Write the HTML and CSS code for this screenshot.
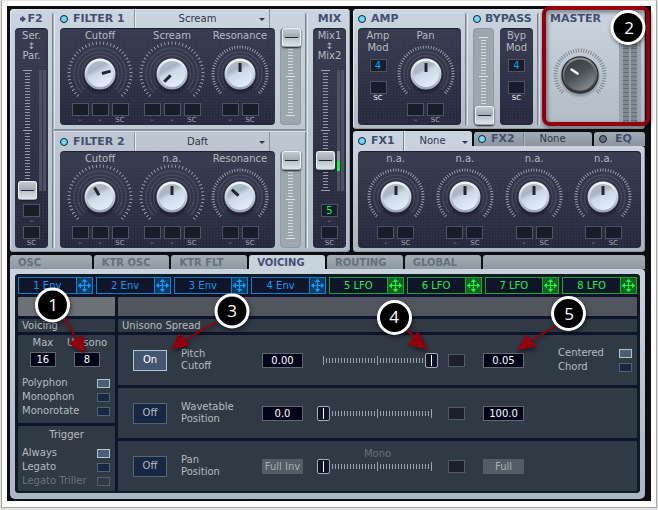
FILE: index.html
```html
<!DOCTYPE html>
<html lang="en">
<head>
<meta charset="utf-8">
<title>Synth</title>
<link rel="stylesheet" href="styles.css">
</head>
<body>
<svg class="defs" aria-hidden="true">
  <defs>
    <linearGradient id="cap-face" x1="0.1" y1="0" x2="0.6" y2="1">
      <stop offset="0" stop-color="#b4bfcb"/>
      <stop offset="0.35" stop-color="#a9b5c1"/>
      <stop offset="0.5" stop-color="#ccd8e5"/>
      <stop offset="1" stop-color="#e4eefa"/>
    </linearGradient>
    <linearGradient id="cap-rim" x1="0" y1="0" x2="0" y2="1">
      <stop offset="0" stop-color="#f4f9ff"/>
      <stop offset="1" stop-color="#98a4b4"/>
    </linearGradient>
    <linearGradient id="master-face" x1="0.1" y1="0" x2="0.7" y2="1">
      <stop offset="0" stop-color="#393d41"/>
      <stop offset="0.5" stop-color="#4a4f54"/>
      <stop offset="1" stop-color="#858c93"/>
    </linearGradient>
    <linearGradient id="master-rim" x1="0" y1="0" x2="0" y2="1">
      <stop offset="0" stop-color="#8d949b"/>
      <stop offset="1" stop-color="#34383c"/>
    </linearGradient>
    <filter id="soft" x="-30%" y="-30%" width="160%" height="160%"><feGaussianBlur stdDeviation="1.5"/></filter>
  </defs>
  <symbol id="rings" viewBox="-34 -34 68 68" overflow="visible">
    <g fill="none" stroke="#555a6c" stroke-opacity=".55" stroke-width="1.5">
      <path d="M-13 13A18.4 18.4 0 1 1 13 13"/>
      <path d="M-15.5 15.5A22 22 0 1 1 15.5 15.5"/>
    </g>
  </symbol>
  <symbol id="wide" viewBox="-34 -34 68 68" overflow="visible">
    <path d="M-18.4 18.4A26 26 0 1 1 18.4 18.4" fill="none" stroke="#555a6c" stroke-opacity=".55" stroke-width="1.5"/>
    <path pathLength="161" d="M-21.9 21.9A31 31 0 1 1 21.9 21.9" fill="none" stroke="#a3a8b2" stroke-width="3" stroke-dasharray="1 3"/>
  </symbol>
  <symbol id="narrow" viewBox="-34 -34 68 68" overflow="visible">
    <path pathLength="145" d="M-19.1 19.1A27 27 0 1 1 19.1 19.1" fill="none" stroke="#a3a8b2" stroke-width="3" stroke-dasharray="1 2"/>
  </symbol>
  <symbol id="cap" viewBox="-34 -34 68 68" overflow="visible">
    <circle cy="2" r="16" fill="#10121c" fill-opacity=".7" filter="url(#soft)"/>
    <circle r="15.5" fill="url(#cap-rim)"/>
    <circle r="13" fill="url(#cap-face)"/>
  </symbol>
  <symbol id="move" viewBox="0 0 15 15">
    <path d="M7.5 2v11M2 7.5h11" stroke="currentColor" stroke-width="1.2"/>
    <path d="M7.5 .8 10.3 4H4.7zM7.5 14.2 10.3 11H4.7zM.8 7.5 4 4.7v5.6zM14.2 7.5 11 4.7v5.6z" fill="currentColor"/>
  </symbol>
</svg>

<main class="sheet">
<div class="synth">
  <div class="upper">
    <section class="module filters">
      <div class="strip">
        <h2 class="center"><svg class="arrow" viewBox="0 0 6 8"><path d="M0 2.5h2V.5L6 4 2 7.5v-2H0z" fill="currentColor"/></svg>F2</h2>
        <div class="dark column">
          <label class="route" for="f2">Ser.<span>↕</span>Par.</label>
          <div class="lane">
            <input id="f2" class="fader long" type="range" min="0" max="100" value="0">
            <div class="meter"><i></i><i></i></div>
          </div>
          <label class="mod"><button></button>–</label>
          <label class="mod"><button></button>SC</label>
        </div>
      </div>
      <div class="groove"></div>
      <div class="pair">
        <section class="filter">
          <header><h2><i class="led"></i>FILTER 1</h2>
            <div class="picker"><select aria-label="Filter 1"><option>Scream</option></select></div></header>
          <div class="dark knobs three">
            <div class="knob"><label>Cutoff<svg viewBox="-34 -32 68 60"><use href="#rings" x="-34" y="-34" width="68" height="68"/><use href="#wide" x="-34" y="-34" width="68" height="68"/><use href="#cap" x="-34" y="-34" width="68" height="68"/><path d="M0-2v-9" transform="rotate(75)"/></svg><input type="range"></label>
              <div class="mods"><label class="mod"><button></button>–</label><label class="mod"><button></button>–</label><label class="mod"><button></button>SC</label></div></div>
            <div class="knob"><label>Scream<svg viewBox="-34 -32 68 60"><use href="#rings" x="-34" y="-34" width="68" height="68"/><use href="#wide" x="-34" y="-34" width="68" height="68"/><use href="#cap" x="-34" y="-34" width="68" height="68"/><path d="M0-2v-9" transform="rotate(225)"/></svg><input type="range"></label>
              <div class="mods"><label class="mod"><button></button>–</label><label class="mod"><button></button>–</label><label class="mod"><button></button>SC</label></div></div>
            <div class="knob"><label>Resonance<svg viewBox="-34 -32 68 60"><use href="#rings" x="-34" y="-34" width="68" height="68"/><use href="#narrow" x="-34" y="-34" width="68" height="68"/><use href="#cap" x="-34" y="-34" width="68" height="68"/><path d="M0-2v-9"/></svg><input type="range"></label>
              <div class="mods"><label class="mod"><button></button>–</label><label class="mod"><button></button>SC</label></div></div>
          </div>
          <input class="fader light" type="range" min="0" max="100" value="100" aria-label="Filter 1 level">
        </section>
        <section class="filter">
          <header><h2><i class="led"></i>FILTER 2</h2>
            <div class="picker"><select aria-label="Filter 2"><option>Daft</option></select></div></header>
          <div class="dark knobs three">
            <div class="knob"><label>Cutoff<svg viewBox="-34 -32 68 60"><use href="#rings" x="-34" y="-34" width="68" height="68"/><use href="#wide" x="-34" y="-34" width="68" height="68"/><use href="#cap" x="-34" y="-34" width="68" height="68"/><path d="M0-2v-9" transform="rotate(-30)"/></svg><input type="range"></label>
              <div class="mods"><label class="mod"><button></button>–</label><label class="mod"><button></button>–</label><label class="mod"><button></button>SC</label></div></div>
            <div class="knob"><label>n.a.<svg viewBox="-34 -32 68 60"><use href="#rings" x="-34" y="-34" width="68" height="68"/><use href="#wide" x="-34" y="-34" width="68" height="68"/><use href="#cap" x="-34" y="-34" width="68" height="68"/><path d="M0-2v-9"/></svg><input type="range"></label>
              <div class="mods"><label class="mod"><button></button>–</label><label class="mod"><button></button>–</label><label class="mod"><button></button>SC</label></div></div>
            <div class="knob"><label>Resonance<svg viewBox="-34 -32 68 60"><use href="#rings" x="-34" y="-34" width="68" height="68"/><use href="#narrow" x="-34" y="-34" width="68" height="68"/><use href="#cap" x="-34" y="-34" width="68" height="68"/><path d="M0-2v-9" transform="rotate(-48)"/></svg><input type="range"></label>
              <div class="mods"><label class="mod"><button></button>–</label><label class="mod"><button></button>SC</label></div></div>
          </div>
          <input class="fader light" type="range" min="0" max="100" value="100" aria-label="Filter 2 level">
        </section>
      </div>
      <div class="groove"></div>
      <div class="strip">
        <h2 class="center">MIX</h2>
        <div class="dark column">
          <label class="route" for="mix">Mix1<span>↕</span>Mix2</label>
          <div class="lane">
            <input id="mix" class="fader long" type="range" min="0" max="100" value="25">
            <div class="meter"><i class="lit"></i><i></i></div>
          </div>
          <label class="mod"><button class="green">5</button>–</label>
          <label class="mod"><button></button>SC</label>
        </div>
      </div>
    </section>

    <div class="right">
      <section class="module outputs">
        <section class="amp">
          <h2><i class="led"></i>AMP</h2>
          <div class="dark ampbody">
            <div class="modcol"><p>Amp<br>Mod</p><button class="slot blue">4</button><label class="mod white"><button></button>SC</label></div>
            <div class="knob"><label>Pan<svg viewBox="-34 -32 68 60"><use href="#rings" x="-34" y="-34" width="68" height="68"/><use href="#narrow" x="-34" y="-34" width="68" height="68"/><use href="#cap" x="-34" y="-34" width="68" height="68"/><path d="M0-2v-9"/></svg><input type="range"></label>
              <div class="mods"><label class="mod"><button></button>–</label><label class="mod"><button></button>SC</label></div></div>
          </div>
        </section>
        <div class="groove"></div>
        <section class="bypass">
          <h2><i class="led"></i>BYPASS</h2>
          <div class="bypassbody">
            <input class="fader light" type="range" min="0" max="100" value="0" aria-label="Bypass">
            <div class="dark modcol"><p>Byp<br>Mod</p><button class="slot blue">4</button><label class="mod white"><button></button>SC</label></div>
          </div>
        </section>
        <div class="groove"></div>
        <section class="master">
          <div>
            <h2>MASTER</h2>
            <label class="masterknob"><svg viewBox="-30 -30 60 60">
              <path pathLength="136" d="M-17.3 17.3A24.5 24.5 0 1 1 17.3 17.3" fill="none" stroke="#6f7a86" stroke-width="4" stroke-dasharray="1 2"/>
              <circle cy="2" r="19" fill="#4c545c" opacity=".5" filter="url(#soft)"/>
              <circle r="18.7" fill="#26292c"/><circle r="17.5" fill="url(#master-rim)"/><circle r="15.5" fill="url(#master-face)"/>
              <path d="M-2.5-1.5-8.5-5.5" stroke="#f2f4f6" stroke-width="2.6" stroke-linecap="round"/></svg><input type="range" aria-label="Master"></label>
          </div>
          <div class="vu"><i></i><i></i></div>
        </section>
      </section>

      <section class="fx">
        <div class="fxtabs">
          <div class="fxtab on"><h2><i class="led"></i>FX1</h2><div class="picker"><select aria-label="FX1"><option>None</option></select></div></div>
          <div class="fxtab"><h2><i class="led"></i>FX2</h2><div class="picker plain"><select aria-label="FX2"><option>None</option></select></div></div>
          <div class="fxtab eq"><h2><i class="led off"></i>EQ</h2></div>
        </div>
        <div class="module fxbody">
          <div class="dark knobs four">
            <div class="knob"><label>n.a.<svg viewBox="-34 -32 68 60"><use href="#rings" x="-34" y="-34" width="68" height="68"/><use href="#narrow" x="-34" y="-34" width="68" height="68"/><use href="#cap" x="-34" y="-34" width="68" height="68"/><path d="M0-2v-9"/></svg><input type="range"></label>
              <div class="mods"><label class="mod"><button></button>–</label><label class="mod"><button></button>SC</label></div></div>
            <div class="knob"><label>n.a.<svg viewBox="-34 -32 68 60"><use href="#rings" x="-34" y="-34" width="68" height="68"/><use href="#narrow" x="-34" y="-34" width="68" height="68"/><use href="#cap" x="-34" y="-34" width="68" height="68"/><path d="M0-2v-9"/></svg><input type="range"></label>
              <div class="mods"><label class="mod"><button></button>–</label><label class="mod"><button></button>SC</label></div></div>
            <div class="knob"><label>n.a.<svg viewBox="-34 -32 68 60"><use href="#rings" x="-34" y="-34" width="68" height="68"/><use href="#narrow" x="-34" y="-34" width="68" height="68"/><use href="#cap" x="-34" y="-34" width="68" height="68"/><path d="M0-2v-9"/></svg><input type="range"></label>
              <div class="mods"><label class="mod"><button></button>–</label><label class="mod"><button></button>SC</label></div></div>
            <div class="knob"><label>n.a.<svg viewBox="-34 -32 68 60"><use href="#rings" x="-34" y="-34" width="68" height="68"/><use href="#narrow" x="-34" y="-34" width="68" height="68"/><use href="#cap" x="-34" y="-34" width="68" height="68"/><path d="M0-2v-9"/></svg><input type="range"></label>
              <div class="mods"><label class="mod"><button></button>–</label><label class="mod"><button></button>SC</label></div></div>
          </div>
        </div>
      </section>
    </div>
  </div>

  <nav class="tabs">
    <button>OSC</button><button>KTR OSC</button><button>KTR FLT</button><button class="on">VOICING</button><button>ROUTING</button><button>GLOBAL</button><span></span>
  </nav>
  <section class="voicing">
    <div class="screen">
      <div class="sources">
        <button><span>1 Env</span><svg><use href="#move"/></svg></button>
        <button><span>2 Env</span><svg><use href="#move"/></svg></button>
        <button><span>3 Env</span><svg><use href="#move"/></svg></button>
        <button><span>4 Env</span><svg><use href="#move"/></svg></button>
        <button class="lfo"><span>5 LFO</span><svg><use href="#move"/></svg></button>
        <button class="lfo"><span>6 LFO</span><svg><use href="#move"/></svg></button>
        <button class="lfo"><span>7 LFO</span><svg><use href="#move"/></svg></button>
        <button class="lfo"><span>8 LFO</span><svg><use href="#move"/></svg></button>
      </div>
      <div class="columns">
        <div class="stack">
          <div class="bar pale"></div>
          <h3>Voicing</h3>
          <div class="block voices">
            <div class="counts">
              <label>Max<input type="text" value="16"></label>
              <label>Unisono<input type="text" value="8"></label>
            </div>
            <label class="option">Polyphon<input type="radio" name="mode" checked></label>
            <label class="option">Monophon<input type="radio" name="mode"></label>
            <label class="option">Monorotate<input type="radio" name="mode"></label>
          </div>
          <div class="block trigger">
            <h4>Trigger</h4>
            <label class="option">Always<input type="radio" name="trigger" checked></label>
            <label class="option">Legato<input type="radio" name="trigger"></label>
            <label class="option dim">Legato Triller<input type="radio" name="trigger" disabled></label>
          </div>
        </div>
        <div class="stack">
          <div class="bar"></div>
          <h3>Unisono Spread</h3>
          <div class="block spread">
            <button class="toggle on">On</button>
            <label for="pitch">Pitch<br>Cutoff</label>
            <input type="text" value="0.00" aria-label="Pitch">
            <div class="slide"><input id="pitch" type="range" min="0" max="100" value="100"></div>
            <button class="slot" aria-label="Pitch mod"></button>
            <input type="text" value="0.05" aria-label="Cutoff">
            <div class="options">
              <label class="option">Centered<input type="radio" name="shape" checked></label>
              <label class="option">Chord<input type="radio" name="shape"></label>
            </div>
          </div>
          <div class="block spread">
            <button class="toggle">Off</button>
            <label for="wave">Wavetable<br>Position</label>
            <input type="text" value="0.0" aria-label="Wavetable">
            <div class="slide"><input id="wave" type="range" min="0" max="100" value="0"></div>
            <button class="slot" aria-label="Wavetable mod"></button>
            <input type="text" value="100.0" aria-label="Position">
          </div>
          <div class="block spread">
            <button class="toggle">Off</button>
            <label for="pan">Pan<br>Position</label>
            <input class="flat" type="text" value="Full Inv" aria-label="Pan">
            <div class="slide"><span>Mono</span><input id="pan" type="range" min="0" max="100" value="0"></div>
            <button class="slot" aria-label="Pan mod"></button>
            <input class="flat" type="text" value="Full" aria-label="Width">
          </div>
        </div>
      </div>
    </div>
  </section>
</div>
</main>

<svg class="notes" viewBox="0 0 658 510">
  <g class="shade">
    <rect x="544" y="8" width="104" height="116" rx="6" class="frame"/>
    <g class="lines"><path d="M64 318 77 340M218 321 185 340M406 329 416 339M556 326 532 340"/></g>
    <g class="heads"><path d="M84.5 353.5 68.5 343.5 83.5 334.5zM171 349.5 179.5 333.5 190 345.5zM427.5 350 407.5 344.500 418 331.500zM517 350.5 526 334 536.5 346.5z"/></g>
    <g class="badges">
      <circle cx="52.5" cy="305" r="16"/><circle cx="628" cy="27.5" r="16"/><circle cx="232" cy="311" r="16"/><circle cx="394.5" cy="317.5" r="16"/><circle cx="568.5" cy="313.5" r="16"/>
    </g>
  </g>
  <g class="digits"><text x="53" y="311">1</text><text x="629" y="34">2</text><text x="232" y="317">3</text><text x="394" y="323">4</text><text x="569" y="320">5</text></g>
</svg>
</body>
</html>
```
FILE: styles.css
```css
* { box-sizing: border-box; }
body {
  margin: 0;
  position: relative;
  min-height: 100vh;
  background: #e2e2e2;
  font: 10px/12px "DejaVu Sans", sans-serif;
  color: #b6bbc0;
  overflow: hidden;
}
.defs { position: absolute; width: 0; height: 0; }
button, input, select { margin: 0; padding: 0; border: 0; border-radius: 0; font: inherit; color: inherit; background: none; appearance: none; }
h2, h3, h4, p { margin: 0; font-size: 10px; font-weight: normal; }

.sheet {
  margin: 0 1px;
  border: 1px solid #a6a6a6;
  border-top-color: #e2e2e2;
  background: #fff;
  padding: 5px 5px 6px;
}
.synth { background: #0b0d0f; padding: 3px 6px 2px 3px; }
.upper { display: grid; grid-template-columns: 340fr 292fr; gap: 3px; }
.right { display: flex; flex-direction: column; gap: 2px; min-width: 0; }

.module {
  background: linear-gradient(#cad5e0, #b0bbc5);
  border-radius: 4px;
  padding: 0 4px 4px 5px;
  box-shadow: inset 1px 1px #dbe4ec, inset -1px -1px #8f9aa5;
}
h2 {
  display: flex;
  align-items: center;
  gap: 5px;
  height: 19px;
  font-size: 11px;
  font-weight: bold;
  color: #454f6f;
}
h2.center { justify-content: center; gap: 1px; }
.arrow { width: 6px; height: 8px; flex: none; }
.led { width: 8px; height: 8px; flex: none; border: 1px solid #10202e; border-radius: 50%; background: #6ed8f8; }
.led.off { background: #6a6d78; }
.dark {
  background: radial-gradient(circle at 1px 1px, #4a4e6033 0 1px, transparent 1px) 0 0 / 3px 3px, linear-gradient(#393c50, #25283c);
  border-radius: 4px;
  box-shadow: inset 0 1px 1px #1b1e2c;
}
.groove { flex: none; width: 3px; margin: 4px 5px 0 4px; border-left: 1px solid #77828d; background: #aab4be; border-right: 1px solid #e1e8ee; border-radius: 2px 2px 0 0; }

.filters { display: flex; min-width: 0; }
.strip { width: 33px; flex: none; }
.column { height: 220px; padding: 2px 0 0; display: flex; flex-direction: column; align-items: center; }
.route { text-align: center; display: flex; flex-direction: column; }
.route span { height: 8px; line-height: 8px; font-size: 9px; }
.lane { display: flex; gap: 2px; height: 139px; margin: -1px 0 4px; }
.meter { display: flex; gap: 1px; padding: 9px 0; }
.meter i { width: 3px; background: #4d5163; }
.meter .lit { background: linear-gradient(#4d5163 0 81px, #8a8e9b 81px 91px, #19f03c 91px 101px, #4d5163 101px); }

.pair { flex: 1; min-width: 0; display: flex; flex-direction: column; gap: 7px; }
.filter { display: grid; grid-template: 19px 97px / 1fr 21px; column-gap: 5px; position: relative; }
.filter header { display: flex; }
.filter header + .dark { grid-row: 2; }
.filter > .fader { grid-column: 2; grid-row: 2; }
.filter header h2 { width: 75px; flex: none; border-right: 1px solid #8a95a0; }
.filter + .filter::before { content: ""; position: absolute; left: -6px; right: -5px; top: -3px; height: 2px; background: #87929d; border-bottom: 1px solid #dce4eb; }
.picker { flex: 1; min-width: 0; position: relative; margin-right: 5px; border-left: 1px solid #e4ebf1; border-right: 1px solid #8a95a0; }
.picker select { width: 100%; height: 100%; text-align: center; text-align-last: center; color: #2d3644; padding-right: 10px; }
.picker::after { content: ""; position: absolute; right: 4px; bottom: 7px; border: 3px solid transparent; border-top-color: #2e3850; border-bottom: 0; }
.picker.plain::after { display: none; }

.knobs { display: grid; height: 97px; }
.three { grid-template-columns: 72fr 72fr 64fr; padding: 0 3px 0 4px; }
.four { grid-template-columns: repeat(4, 1fr); padding: 0 3px; }
.knob { display: flex; flex-direction: column; align-items: center; padding-top: 2px; min-width: 0; }
.knob > label { position: relative; display: flex; flex-direction: column; align-items: center; }
.knob svg { width: 68px; height: 60px; overflow: visible; margin: 0 -4px; }
.knob svg > path { stroke: #23262e; stroke-width: 3; }
.knob label input, .masterknob input { position: absolute; inset: 16px 16px 12px; width: auto; opacity: 0; }
.mods { display: flex; gap: 3px; margin-top: 1px; }
.mod { display: flex; flex-direction: column; align-items: center; font-size: 7px; line-height: 9px; color: #a4a8b2; height: 22px; }
.mod.white { color: #fff; }
.mod button, .slot { width: 17px; height: 13px; flex: none; background: #191c29; border: 1px solid #4f5364; font-size: 10px; line-height: 11px; text-align: center; }
.blue { color: #109cf8; }
.mod .green { color: #1df04a; }

.fader {
  writing-mode: vertical-lr;
  direction: rtl;
  display: block;
  width: 19px;
  height: 139px;
  background:
    linear-gradient(#a0a4ae, #a0a4ae) center 9px / 9px 1px,
    linear-gradient(#a0a4ae, #a0a4ae) center center / 9px 1px,
    linear-gradient(#a0a4ae, #a0a4ae) center 129px / 9px 1px,
    repeating-linear-gradient(#9397a3 0 1px, transparent 1px 3px) center 9px / 5px 121px;
  background-repeat: no-repeat;
}
.fader.light {
  width: 21px;
  height: 97px;
  border-radius: 4px;
  box-shadow: inset 0 0 0 1px #8f99a2;
  background:
    linear-gradient(#dde3e8, #dde3e8) center 9px / 9px 1px,
    linear-gradient(#dde3e8, #dde3e8) center 48px / 9px 1px,
    linear-gradient(#dde3e8, #dde3e8) center 87px / 9px 1px,
    repeating-linear-gradient(#d3dae0 0 1px, transparent 1px 3px) center 9px / 5px 79px,
    linear-gradient(#9da7af, #9da7af);
  background-repeat: no-repeat;
}
.fader::-webkit-slider-thumb {
  appearance: none;
  width: 19px;
  height: 19px;
  border-radius: 3px;
  border: 1px solid #eef3f7;
  border-bottom-color: #98a1aa;
  background: linear-gradient(#232a36, #232a36) center / 13px 1px no-repeat, linear-gradient(#c2cad2, #9fa9b2 49%, #b8c1ca 51%, #dde4eb);
  box-shadow: 0 1px 2px #1a1d28;
}
.fader.light::-webkit-slider-thumb { margin-left: 1px; }

.outputs { display: flex; }
.amp { flex: 1; min-width: 0; }
.ampbody { height: 97px; display: grid; grid-template-columns: 40px 1fr; padding-right: 8px; }
.modcol { display: flex; flex-direction: column; align-items: center; padding-top: 2px; text-align: center; }
.modcol .slot { margin: 5px 0 9px; }
.bypass { width: 60px; flex: none; }
.bypass h2 { gap: 4px; }
.bypassbody { display: flex; justify-content: space-between; }
.bypassbody .modcol { width: 33px; height: 97px; }
.master { flex: none; width: 96px; display: flex; justify-content: space-between; padding-left: 5px; }
.master > div:first-child { width: 60px; }
.masterknob { display: block; position: relative; }
.masterknob svg { display: block; width: 60px; height: 60px; margin-top: 17px; }
.vu { width: 22px; margin-top: 8px; background: #98a2ab; padding: 0 4px; display: flex; gap: 2px; }
.vu i { flex: 1; background: repeating-linear-gradient(#818a93 0 3px, #646d76 3px 4px); }

.fxtabs { display: grid; grid-template-columns: 119fr 118fr 51fr; gap: 2px; align-items: start; }
.fxtab { display: flex; height: 14px; margin-top: 1px; padding-left: 4px; background: linear-gradient(#a1abb4, #8b959f); border-radius: 3px 3px 0 0; }
.fxtab h2 { width: 46px; flex: none; height: 100%; border-right: 1px solid #78838d; }
.fxtab.on { height: 20px; margin: 0 0 -5px; padding-left: 5px; background: #c8d3dd; position: relative; }
.fxtab .picker { margin: 0; border-right: 0; }
.fxtab .picker select { padding-right: 12px; }
.fxtab.eq h2 { border: 0; gap: 8px; padding-left: 1px; }
.fxtab:not(.on) .picker { border-color: #aeb7bf; }
.fxbody { padding-top: 5px; background: linear-gradient(#c8d3dd, #a9b4bf); border-radius: 0 4px 4px 4px; box-shadow: inset -1px -1px #8f9aa5; }

.tabs { display: grid; grid-template-columns: 82fr 76fr 76fr 76fr 76fr 76fr 163fr; gap: 2px; margin-top: 3px; height: 14px; }
.tabs button, .tabs span { text-align: left; padding: 1px 0 0 8px; font-weight: bold; color: #65707e; background: linear-gradient(#a5aeb7, #8d98a2); border-radius: 3px 3px 0 0; white-space: nowrap; }
.tabs button.on { background: #c9d3dd; color: #454f6f; }
.voicing { background: linear-gradient(#c9d3dd, #aab6c2); padding: 5px 5px 6px; border-radius: 0 4px 5px 5px; }
.screen { background: #0d152a; border-radius: 4px; padding: 3px 3px 2px; box-shadow: inset 0 0 0 2px #101d20; }
.sources { display: grid; grid-template-columns: repeat(8, 1fr); gap: 3px; }
.sources button { display: flex; height: 17px; border: 1px solid #1080c8; background: #11152a; color: #109cf8; align-items: stretch; }
.sources span { flex: 1; line-height: 15px; }
.sources svg { width: 16px; height: 15px; background: #0c3b63; border-left: 1px solid #1080c8; }
.sources .lfo { color: #1df04a; border-color: #15a832; }
.sources .lfo svg { background: #12651f; border-color: #15a832; }

.columns { display: grid; grid-template-columns: 97px 1fr; gap: 3px; margin-top: 3px; }
.stack { display: flex; flex-direction: column; gap: 3px; min-width: 0; }
.bar { height: 19px; background: #50555f; border-radius: 1px; }
.bar.pale { background: #6b7177; }
.stack h3 { height: 13px; line-height: 13px; padding-left: 4px; background: #2f3a45; }
.block { background: #2f3a45; border-radius: 1px; }
.voices { height: 88px; padding: 2px 4px; }
.trigger { height: 65px; padding: 3px 4px 0; }
.trigger h4 { text-align: center; margin-bottom: 5px; }
.counts { display: flex; gap: 7px; justify-content: center; margin-bottom: 9px; }
.counts label { display: flex; flex-direction: column; align-items: center; gap: 3px; }
.counts label:first-child { width: 34px; }
input[type="text"] { width: 41px; height: 15px; text-align: center; background: #02041a; border: 1px solid #626770; color: #fff; }
.counts input[type="text"] { width: 26px; }
.option { display: flex; align-items: center; justify-content: space-between; height: 14px; white-space: nowrap; }
.option input { width: 13px; height: 9px; flex: none; margin-right: 1px; background: #182742; border: 1px solid #566070; }
.option input:checked { background: #4b5e76; border-color: #b2c4d2; }
.dim { color: #69727c; }
.option.dim input { background: none; }

.spread { height: 50px; padding: 0 4px 0 15px; display: grid; grid-template-columns: 34px 67px 41px 121px 17px 41px 1fr; column-gap: 14px; align-items: center; }
.spread .toggle { width: 34px; height: 21px; background: #182742; border: 1px solid #5a6573; }
.spread .toggle.on { background: #44566e; border-color: #b2c4d2; color: #fff; }
.spread .slot { margin-left: -4px; background: #1d1f2c; border-color: #555a64; }
input.flat[type="text"] { background: #525d66; border-color: #525d66; color: #aab0b5; }
.slide { position: relative; }
.slide span { position: absolute; left: 0; right: 0; bottom: 14px; text-align: center; color: #69727c; }
.slide input {
  display: block;
  width: 100%;
  height: 15px;
  background:
    linear-gradient(#9ba2a9, #9ba2a9) 6px center / 1px 9px,
    linear-gradient(#9ba2a9, #9ba2a9) center center / 1px 9px,
    linear-gradient(#9ba2a9, #9ba2a9) right 6px center / 1px 9px,
    repeating-linear-gradient(90deg, #9ba2a9 0 1px, transparent 1px 3px) center / calc(100% - 12px) 5px;
  background-repeat: no-repeat;
}
.slide input::-webkit-slider-thumb { appearance: none; width: 13px; height: 15px; border: 1px solid #a4aab2; border-radius: 2px; background: linear-gradient(#fff, #fff) center / 1px 11px no-repeat, #11152a; }
.options { justify-self: end; width: 75px; }

.notes { position: absolute; inset: 0; width: 100%; height: 100%; pointer-events: none; }
.shade { filter: drop-shadow(1px 2px 2px rgba(0, 0, 0, .5)); }
.frame { fill: none; stroke: #93000d; stroke-width: 4; }
.lines { stroke: #93000d; stroke-width: 2; }
.heads { fill: #93000d; }
.badges { fill: #000; stroke: #fff; stroke-width: 3; }
.digits { fill: #fff; font: 17px "Open Sans", sans-serif; text-anchor: middle; }
```
